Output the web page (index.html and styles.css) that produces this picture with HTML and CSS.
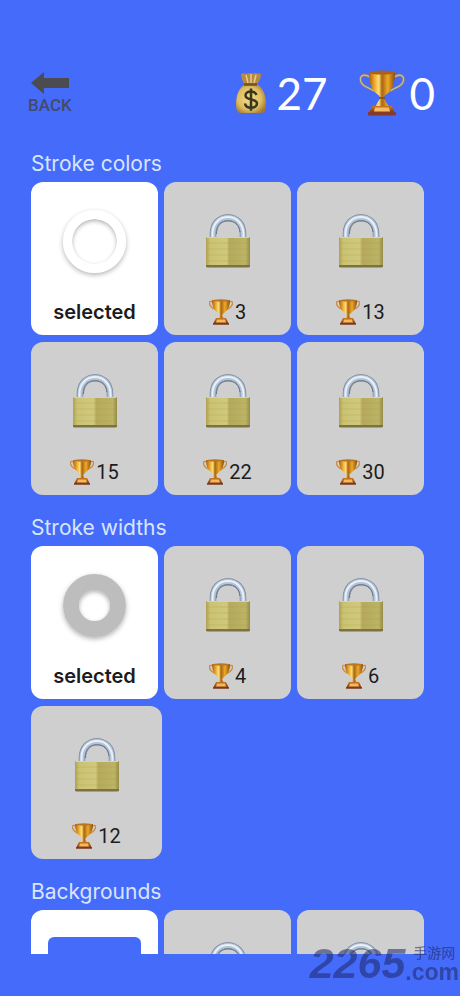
FILE: index.html
```html
<!DOCTYPE html>
<html lang="en">
<head>
    <meta charset="UTF-8">
    <meta name="viewport" content="width=device-width, initial-scale=1.0">
    <title>Shop</title>
    <link rel="stylesheet" href="styles.css">
</head>
<body>
    <!-- shared icons -->
    <svg class="sprite" width="0" height="0" aria-hidden="true">
        <defs>
            <linearGradient id="brass" x1="0" x2="1" y1="0" y2="0">
                <stop offset="0" stop-color="#aea252"/>
                <stop offset="0.1" stop-color="#cbc373"/>
                <stop offset="0.47" stop-color="#d0c87c"/>
                <stop offset="0.53" stop-color="#b5aa5c"/>
                <stop offset="0.9" stop-color="#bdb365"/>
                <stop offset="1" stop-color="#958b45"/>
            </linearGradient>
            <linearGradient id="gold" x1="0" x2="1" y1="0" y2="0">
                <stop offset="0" stop-color="#a85c12"/>
                <stop offset="0.22" stop-color="#f0ad2c"/>
                <stop offset="0.38" stop-color="#fbe07c"/>
                <stop offset="0.5" stop-color="#a96411"/>
                <stop offset="0.72" stop-color="#edaa25"/>
                <stop offset="1" stop-color="#8c4b10"/>
            </linearGradient>
            <linearGradient id="base" x1="0" x2="0" y1="0" y2="1">
                <stop offset="0" stop-color="#c87922"/>
                <stop offset="1" stop-color="#783219"/>
            </linearGradient>
            <radialGradient id="sack" cx="0.45" cy="0.5" r="0.6">
                <stop offset="0" stop-color="#f4dc8c"/>
                <stop offset="0.65" stop-color="#dfbd62"/>
                <stop offset="1" stop-color="#a57930"/>
            </radialGradient>
        </defs>
        <symbol id="lock" viewBox="0 0 44 54">
            <path d="M7 24v-4C7 10 13 3.500 22 3.500S37 10 37 20v4" fill="none" stroke="#76869a" stroke-width="6.500"/>
            <path d="M7 24v-4C7 10 13 3.500 22 3.500S37 10 37 20v4" fill="none" stroke="#b4c3d6" stroke-width="5"/>
            <path d="M6.500 24v-4C6.500 10 13 3 22 3s15 7 15.500 17v4" fill="none" stroke="#e8f0fa" stroke-width="2"/>
            <path d="M10.500 20C10.500 12 15 7 22 7s11 4 12 11" fill="none" stroke="#68758a" stroke-width="1"/>
            <rect x="0" y="23" width="44" height="30" rx="1" fill="url(#brass)"/>
            <path d="M1 29h42M1 35h42M1 41h42M1 47h42" stroke="#a29849" stroke-width="0.600" opacity="0.400"/>
            <path d="M0 51h44v1.500l-1 1H1l-1-1z" fill="#7c7345"/>
            <path d="M1 23.500h42" stroke="#ddd68f" stroke-width="1"/>
        </symbol>
        <symbol id="trophy" viewBox="0 0 46 46">
            <path d="M11 7C4 3 0 6 2 12c2 5 7 5 13 9M35 7c7-4 11-1 9 5-2 5-7 5-13 9" fill="none" stroke="#8d8078" stroke-width="2.600"/>
            <path d="M11 7C4 3 0 6 2 12c2 5 7 5 13 9M35 7c7-4 11-1 9 5-2 5-7 5-13 9" fill="none" stroke="#d3bd9b" stroke-width="1.100"/>
            <path d="M10 2h26c0 10-2 18-8 22-3 2-4 4-2 6l4 7H16l4-7c2-2 1-4-2-6-6-4-8-12-8-22z" fill="url(#gold)"/>
            <ellipse cx="23" cy="2.500" rx="13" ry="2" fill="#a86317"/>
            <path d="M20 28h6" stroke="#85480e" stroke-width="1.500"/>
            <path d="M13 36h20l3 7H10z" fill="url(#base)"/>
            <path d="M16 37.500h14l1 4H15z" fill="#f7bd66"/>
            <rect x="9" y="42" width="28" height="3.500" rx="1" fill="#873a28"/>
        </symbol>
        <symbol id="cup" viewBox="0 0 24 26">
            <path d="M4 3C0 1 0 4 1 6c1 3 4 4 7 5M20 3c4-2 4 1 3 3-1 3-4 4-7 5" fill="none" stroke="#cb8e40" stroke-width="1.400"/>
            <path d="M3 1h18c0 6-2 10-6 13-2 1-2 3-1 4l2 3H8l2-3c1-1 1-3-1-4C5 11 3 7 3 1z" fill="url(#gold)"/>
            <ellipse cx="12" cy="1.500" rx="9" ry="1.200" fill="#b87524"/>
            <path d="M7 19h10l3 6H4z" fill="url(#base)"/>
            <path d="M8 20.500h8l1 3H7z" fill="#f8b75b"/>
            <path d="M4 25h16" stroke="#793a1d" stroke-width="1.500"/>
        </symbol>
    </svg>

    <header class="topbar">
        <button class="back" type="button">
            <svg width="38" height="22" viewBox="0 0 38 22" aria-hidden="true">
                <path d="M0 11 13 0v6h25v10H13v6z" fill="#4b4b50"/>
            </svg>
            BACK
        </button>
        <div class="counter coins">
            <svg width="32" height="42" viewBox="0 0 32 42" aria-hidden="true">
                <path d="M10 13C7 9 6 5 6 2c3-2 5 1 8-1 3 1 5 0 7 0 2 1 3 0 5 1 0 4-2 8-5 11z" fill="#b58b43"/>
                <path d="M11 3l2 8M16 2v9M21 3l-2 8" stroke="#e8cd83" stroke-width="1.500"/>
                <path d="M10 12h12c6 4 9 11 9 20 0 6-1 9-5 9H6c-4 0-5-3-5-9 0-9 3-16 9-20z" fill="url(#sack)"/>
                <path d="M9 12.500h13" stroke="#74501f" stroke-width="2.500"/>
                <path d="M21.500 23c-.8-2.500-3-3.500-5.500-3.500-3.200 0-5.500 1.500-5.500 4 0 5.500 11.500 2.500 11.500 8 0 2.500-2.500 4.300-6 4.300-3.300 0-5.500-1.500-6-4.200M16 16.500v22.300" fill="none" stroke="#38381f" stroke-width="2.500"/>
            </svg>
            <span>27</span>
        </div>
        <div class="counter">
            <svg width="46" height="46" aria-hidden="true"><use href="#trophy"/></svg>
            <span>0</span>
        </div>
    </header>

    <main class="shop">
        <section>
            <h2>Stroke colors</h2>
            <div class="cards">
                <button class="card selected" type="button">
                    <span class="art"><span class="ring"></span></span>
                    <span class="label">selected</span>
                </button>
                <button class="card" type="button">
                    <span class="art"><svg class="lock"><use href="#lock"/></svg></span>
                    <span class="label"><svg class="cup"><use href="#cup"/></svg>3</span>
                </button>
                <button class="card" type="button">
                    <span class="art"><svg class="lock"><use href="#lock"/></svg></span>
                    <span class="label"><svg class="cup"><use href="#cup"/></svg>13</span>
                </button>
                <button class="card" type="button">
                    <span class="art"><svg class="lock"><use href="#lock"/></svg></span>
                    <span class="label"><svg class="cup"><use href="#cup"/></svg>15</span>
                </button>
                <button class="card" type="button">
                    <span class="art"><svg class="lock"><use href="#lock"/></svg></span>
                    <span class="label"><svg class="cup"><use href="#cup"/></svg>22</span>
                </button>
                <button class="card" type="button">
                    <span class="art"><svg class="lock"><use href="#lock"/></svg></span>
                    <span class="label"><svg class="cup"><use href="#cup"/></svg>30</span>
                </button>
            </div>
        </section>

        <section>
            <h2>Stroke widths</h2>
            <div class="cards">
                <button class="card selected" type="button">
                    <span class="art"><span class="ring thick"></span></span>
                    <span class="label">selected</span>
                </button>
                <button class="card" type="button">
                    <span class="art"><svg class="lock"><use href="#lock"/></svg></span>
                    <span class="label"><svg class="cup"><use href="#cup"/></svg>4</span>
                </button>
                <button class="card" type="button">
                    <span class="art"><svg class="lock"><use href="#lock"/></svg></span>
                    <span class="label"><svg class="cup"><use href="#cup"/></svg>6</span>
                </button>
                <button class="card wide" type="button">
                    <span class="art"><svg class="lock"><use href="#lock"/></svg></span>
                    <span class="label"><svg class="cup"><use href="#cup"/></svg>12</span>
                </button>
            </div>
        </section>

        <section>
            <h2>Backgrounds</h2>
            <div class="cards">
                <button class="card selected" type="button" aria-label="Blue">
                    <span class="art"><span class="swatch"></span></span>
                </button>
                <button class="card" type="button" aria-label="Locked">
                    <span class="art"><svg class="lock"><use href="#lock"/></svg></span>
                </button>
                <button class="card" type="button" aria-label="Locked">
                    <span class="art"><svg class="lock"><use href="#lock"/></svg></span>
                </button>
            </div>
        </section>
    </main>

    <!-- site mark over the bottom corner -->
    <div class="watermark">
        <span class="number">2265</span>
        <span class="site">
            <span class="name" lang="zh">手游网</span>
            <span class="domain">.com</span>
        </span>
    </div>
</body>
</html>
```

FILE: styles.css
```css
* {
    box-sizing: border-box;
}

body {
    margin: 0;
    height: 100vh;
    padding-bottom: 42px;
    display: flex;
    flex-direction: column;
    background-color: #456bfa;
    font-family: Inter, "Liberation Sans", sans-serif;
    color: #1c1c1e;
}

button {
    border: none;
    padding: 0;
    color: inherit;
    cursor: pointer;
}

svg {
    display: block;
    flex: none;
}

.sprite {
    position: absolute;
}

/* top bar */
.topbar {
    display: flex;
    align-items: center;
    height: 150px;
    padding: 68px 25px 32px 28px;
}

.back {
    display: flex;
    flex-direction: column;
    align-items: center;
    gap: 1px;
    margin-right: auto;
    background: none;
    font: 500 17px/20px Roboto, sans-serif;
    color: #454a68;
}

.counter {
    display: flex;
    align-items: center;
    gap: 4px;
    font: 44px/50px Lato, sans-serif;
    color: #fff;
}

.coins {
    gap: 9px;
    margin-right: 32px;
}

/* shop list */
.shop {
    flex: 1;
    min-height: 0;
    padding: 0 36px 0 31px;
    overflow-y: auto;
    scrollbar-width: none;
}

section {
    margin-bottom: 19px;
}

h2 {
    margin: 0 0 4px;
    font-size: 21px;
    line-height: 28px;
    font-weight: 400;
    color: #d9e5ff;
}

.cards {
    display: grid;
    grid-template-columns: repeat(3, 1fr);
    gap: 7px 6px;
}

.card {
    display: flex;
    flex-direction: column;
    align-items: center;
    height: 153px;
    border-radius: 12px;
    background-color: #cfcfcf;
    font: 20px/24px Roboto, sans-serif;
}

.card.selected {
    background-color: #fff;
    font: 600 20px/24px Inter, sans-serif;
}

.card.wide {
    margin-right: -4px;
}

.art {
    display: flex;
    align-items: center;
    justify-content: center;
    height: 118px;
}

.label {
    display: flex;
    align-items: center;
    gap: 2px;
    height: 24px;
}

.lock {
    width: 44px;
    height: 54px;
}

.cup {
    width: 24px;
    height: 26px;
}

.ring {
    width: 63px;
    height: 63px;
    border: 9px solid #fff;
    border-radius: 50%;
    box-shadow: 0 2px 5px rgba(0, 0, 0, 0.3), inset 0 2px 4px rgba(0, 0, 0, 0.3);
}

.ring.thick {
    border: 16px solid #bdbdbd;
}

.swatch {
    width: 93px;
    height: 64px;
    border-radius: 6px;
    background-color: #456bfa;
}

/* watermark */
.watermark {
    position: fixed;
    right: 1px;
    bottom: 14px;
    display: flex;
    align-items: flex-end;
    color: #1e2864;
    opacity: 0.55;
    font-family: "Liberation Sans", sans-serif;
    font-weight: bold;
}

.number {
    font-size: 43px;
    line-height: 38px;
    font-style: italic;
}

.site {
    display: flex;
    flex-direction: column;
}

.name {
    padding-left: 8px;
    font: 500 14px/20px "Noto Sans CJK SC", sans-serif;
}

.domain {
    font-size: 23px;
    line-height: 20px;
}
```
